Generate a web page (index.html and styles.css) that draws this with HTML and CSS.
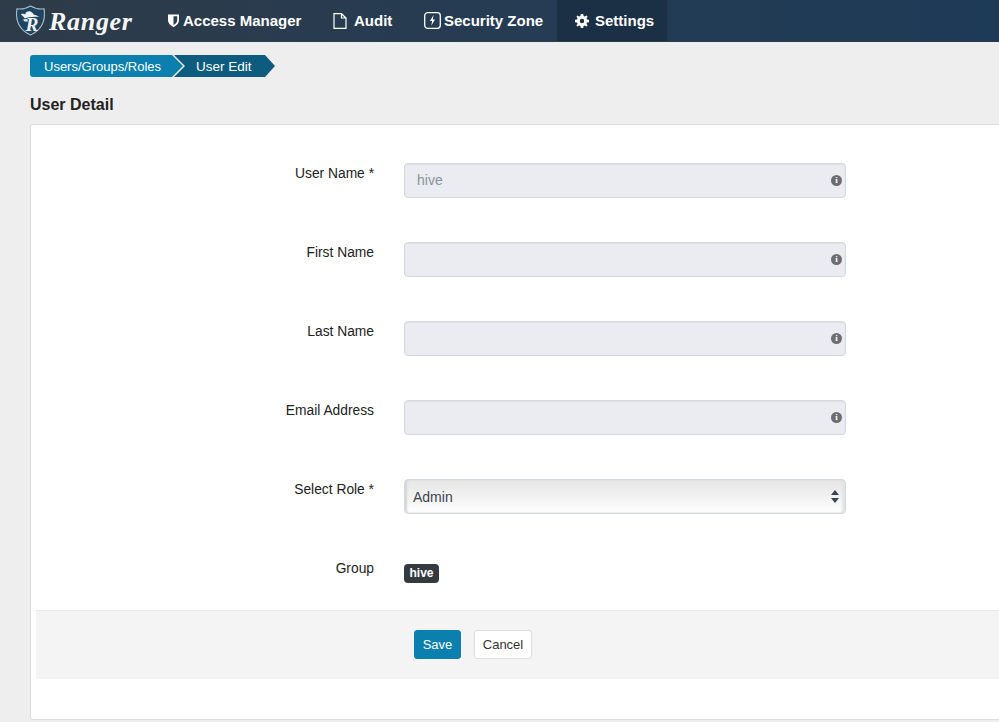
FILE: index.html
```html
<!DOCTYPE html>
<html lang="en">
<head>
<meta charset="utf-8">
<title>Ranger - User Detail</title>
<link rel="stylesheet" href="styles.css">
</head>
<body>
<header class="navbar">
  <a class="brand">
    <svg class="shield" viewBox="0 0 32 32" width="31" height="31">
      <path d="M16 1 C20 3.500 25 4.500 30 4 C31.500 14 29 25 16 31 C3 25 0.500 14 2 4 C7 4.500 12 3.500 16 1Z" fill="#1d4460" stroke="#a9b9c4" stroke-width="1.200"/>
      <path d="M6 9.500 C8 9 9.500 9 10.500 9.800 C11 7 14 5.800 16.500 7 C18 7.800 19 9 19.500 10 C21.500 10 23.500 11 25 12.500 C20 11.500 14 12.500 10 14 C9 12 7.500 10.800 6 9.500Z" fill="#eef2f4"/>
      <path d="M8 15 L13 14.500 L13 17 L10 17Z" fill="#eef2f4"/>
      <text x="17.500" y="27" class="shield-r">R</text>
    </svg>
    <span class="brand-name">Ranger</span>
  </a>
  <nav class="nav">
    <a class="nav-item nav-access">
      <svg class="ico" viewBox="0 0 11 13" width="11" height="13"><path d="M0 0.500 H11 V6 C11 9.500 8.500 11.500 5.500 13 C2.500 11.500 0 9.500 0 6Z" fill="#fff"/><path d="M5.500 2.200 H9.200 V6 C9.200 8.500 7.500 10 5.500 11Z" fill="#2c3d4e"/></svg>
      Access Manager
    </a>
    <a class="nav-item nav-audit">
      <svg class="ico" viewBox="0 0 14 16" width="14" height="16"><path d="M1 0.700 H8.500 L13 5 V15.300 H1Z M8.500 0.700 V5 H13" fill="none" stroke="#fff" stroke-width="1.200"/></svg>
      Audit
    </a>
    <a class="nav-item nav-zone">
      <svg class="ico" viewBox="0 0 17 17" width="17" height="17"><rect x="0.700" y="0.700" width="15.600" height="15.600" rx="3" fill="none" stroke="#fff" stroke-width="1.300"/><path d="M9.500 3 L6 9 H8.200 L7.300 13.500 L11 7.500 H8.800Z" fill="#fff"/></svg>
      Security Zone
    </a>
    <a class="nav-item nav-active">
      <svg class="ico" viewBox="0 0 14 14" width="14" height="14"><path fill-rule="evenodd" fill="#fff" d="M5.800 0 H8.200 L8.600 2 L9.800 2.500 L11.500 1.400 L12.600 2.500 L11.500 4.200 L12 5.400 L14 5.800 V8.200 L12 8.600 L11.500 9.800 L12.600 11.500 L11.500 12.600 L9.800 11.500 L8.600 12 L8.200 14 H5.800 L5.400 12 L4.200 11.500 L2.500 12.600 L1.400 11.500 L2.500 9.800 L2 8.600 L0 8.200 V5.800 L2 5.400 L2.500 4.200 L1.400 2.500 L2.500 1.400 L4.200 2.500 L5.400 2 Z M7 4.800 A2.200 2.200 0 1 0 7 9.200 A2.200 2.200 0 1 0 7 4.800Z"/></svg>
      Settings
    </a>
  </nav>
</header>

<main class="page">
  <div class="crumbs">
    <a class="crumb crumb-first">Users/Groups/Roles</a>
    <span class="crumb crumb-last">User Edit</span>
  </div>
  <h1 class="title">User Detail</h1>

  <section class="card">
    <form class="form">
      <div class="row">
        <label class="label">User Name *</label>
        <div class="field"><span class="input-text muted">hive</span><span class="info">i</span></div>
      </div>
      <div class="row">
        <label class="label">First Name</label>
        <div class="field"><span class="info">i</span></div>
      </div>
      <div class="row">
        <label class="label">Last Name</label>
        <div class="field"><span class="info">i</span></div>
      </div>
      <div class="row">
        <label class="label">Email Address</label>
        <div class="field"><span class="info">i</span></div>
      </div>
      <div class="row">
        <label class="label">Select Role *</label>
        <div class="select">
          <span class="select-text">Admin</span>
          <svg class="updown" viewBox="0 0 8 13" width="8" height="13"><path d="M4 0 L8 5 H0Z M0 8 H8 L4 13Z" fill="#3a4450"/></svg>
        </div>
      </div>
      <div class="row row-group">
        <label class="label">Group</label>
        <div class="tags"><span class="tag">hive</span></div>
      </div>
    </form>
    <div class="actions">
      <button class="btn btn-save" type="button">Save</button>
      <button class="btn btn-cancel" type="button">Cancel</button>
    </div>
  </section>
</main>
</body>
</html>
```

FILE: styles.css
```css
* { box-sizing: border-box; }
html, body { margin: 0; padding: 0; height: 100%; overflow: hidden; }
body {
  background: #eeeeee;
  font-family: "Liberation Sans", Arial, sans-serif;
  font-size: 14px;
  color: #222;
}

.navbar {
  display: flex;
  height: 42px;
  background: linear-gradient(90deg, #2e3b48 0%, #243c55 60%, #1d3a56 100%);
  border-bottom: 1px solid #2a3a4a;
}
.brand { display: flex; align-items: center; width: 151px; padding-left: 15px; }
.shield { flex: none; margin-top: -1px; }
.shield-r { font: italic bold 20px "Liberation Serif", serif; fill: #eef2f4; text-anchor: middle; }
.brand-name {
  margin-left: 3px;
  font: italic bold 26px "Liberation Serif", serif;
  color: #f4f6f7;
  letter-spacing: 0.7px;
  margin-top: 2px;
}
.nav { display: flex; height: 41px; }
.nav-item {
  display: flex;
  align-items: center;
  color: #fff;
  font-weight: bold;
  font-size: 15px;
  white-space: nowrap;
}
.ico { flex: none; }
.nav-access { width: 165px; padding-left: 17px; gap: 4px; }
.nav-audit { width: 104px; padding-left: 17px; gap: 7px; }
.nav-zone { width: 137px; padding-left: 4px; gap: 3px; }
.nav-active { width: 110px; padding-left: 18px; gap: 6px; background: #1b3045; }

.page { padding: 13px 0 0 30px; }

.crumbs { display: flex; height: 22px; }
.crumb {
  display: flex;
  align-items: center;
  height: 22px;
  color: #fff;
  font-size: 13px;
}
.crumb-first {
  width: 153px;
  padding-left: 14px;
  background: #0b7fad;
  border-radius: 3px 0 0 3px;
  clip-path: polygon(0 0, 142px 0, 153px 11px, 142px 22px, 0 22px);
  position: relative;
  z-index: 1;
}
.crumb-last {
  width: 101px;
  margin-left: -9px;
  padding-left: 22px;
  font-size: 13.500px;
  background: #0d5c80;
  clip-path: polygon(0 0, 91px 0, 101px 11px, 91px 22px, 0 22px, 11px 11px);
}

.title { margin: 19px 0 10px; font-size: 16px; line-height: 18px; font-weight: bold; color: #222; }

.card {
  width: 1040px;
  height: 596px;
  padding: 0 5px;
  background: #fff;
  border: 1px solid #dcdcdc;
  border-radius: 3px;
}
.form { height: 485px; padding-top: 38px; }
.row { display: flex; height: 79px; }
.label {
  width: 338px;
  padding-top: 2px;
  text-align: right;
  line-height: 17px;
  font-size: 13.800px;
  color: #222;
}
.field, .select {
  display: flex;
  align-items: center;
  width: 442px;
  height: 35px;
  margin-left: 30px;
  border: 1px solid #d3d8dd;
  border-radius: 4px;
}
.field {
  padding: 0 3px 0 12px;
  background: #eaecf1;
  box-shadow: inset 0 1px 1px #dfe1e6;
}
.input-text { line-height: 17px; }
.muted { color: #8a939b; }
.info {
  width: 11px;
  height: 11px;
  margin-left: auto;
  border-radius: 50%;
  background: #6b6f73;
  color: #fff;
  font: bold 9px/11px "Liberation Serif", serif;
  text-align: center;
}
.select {
  justify-content: space-between;
  padding: 0 6px 0 8px;
  background: linear-gradient(180deg, #e6e6e6 0%, #f0f0f0 45%, #ffffff 100%);
  box-shadow: inset 2px 0 2px #d6d6d6, inset -3px 0 2px #e4e4e4;
}
.select-text { color: #3a4450; }
.row-group .tags { margin-left: 30px; padding-top: 6px; }
.tag {
  display: block;
  padding: 0 5.500px;
  height: 19px;
  line-height: 19px;
  background: #343a40;
  color: #fff;
  font-size: 12px;
  font-weight: bold;
  border-radius: 4px;
}
.actions {
  display: flex;
  gap: 13px;
  align-items: flex-start;
  height: 69px;
  padding: 19px 0 0 378px;
  background: #f4f4f4;
  border-top: 1px solid #e9e9e9;
}
.btn {
  height: 29px;
  padding: 0;
  font: 13px "Liberation Sans", Arial, sans-serif;
  border-radius: 3px;
}
.btn-save { width: 47px; background: #0b7fad; color: #fff; border: 1px solid #0b7fad; }
.btn-cancel { width: 58px; background: #fff; color: #333; border: 1px solid #ddd; }
```
